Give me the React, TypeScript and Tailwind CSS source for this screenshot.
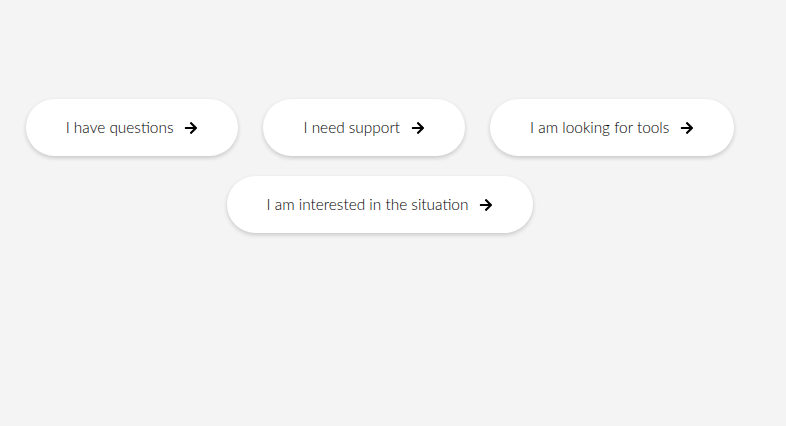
import { FaArrowRight } from 'react-icons/fa'

const options = [
  'I have questions',
  'I need support',
  'I am looking for tools',
  'I am interested in the situation',
]

export default function App() {
  return (
    <div className="min-h-[426px] w-full bg-[#f4f4f4] pt-[99px] font-['Lato',sans-serif]">
      <div className="flex flex-wrap justify-center gap-x-[25px] gap-y-[20px] pl-4 pr-[42px]">
        {options.map((label) => (
          <button
            key={label}
            className="flex h-[57px] items-center gap-[11px] rounded-full bg-white px-10 text-[15.4px] font-light text-[#000] shadow-[0_2px_4px_rgba(0,0,0,0.18)]"
          >
            <span>{label}</span>
            <FaArrowRight className="h-[14px] w-[14px] text-black" />
          </button>
        ))}
      </div>
    </div>
  )
}
